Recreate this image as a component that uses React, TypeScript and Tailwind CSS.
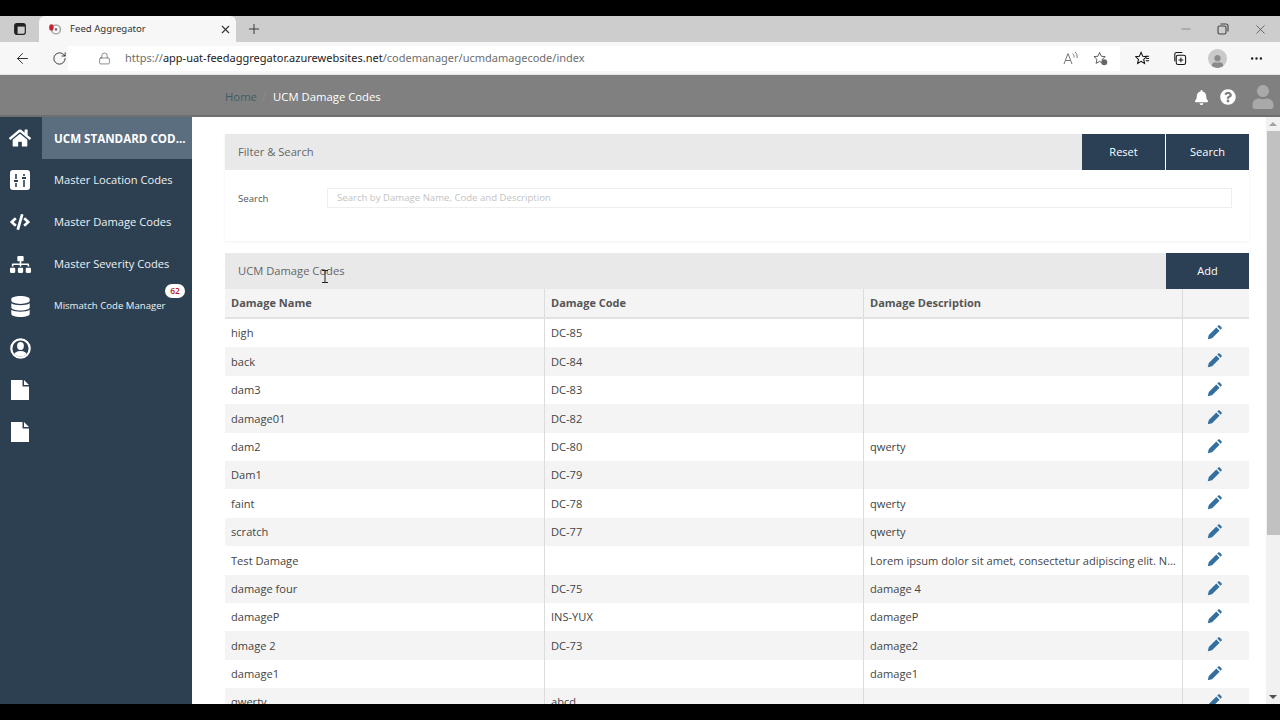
import { FaBell, FaCode, FaDatabase, FaHome, FaQuestionCircle, FaSitemap, FaUser } from "react-icons/fa";
import { ArrowLeft, Ellipsis, Lock, Minus, Plus, RotateCw, X } from "lucide-react";
import type { ReactNode } from "react";

const rows = [
  ["high", "DC-85", ""],
  ["back", "DC-84", ""],
  ["dam3", "DC-83", ""],
  ["damage01", "DC-82", ""],
  ["dam2", "DC-80", "qwerty"],
  ["Dam1", "DC-79", ""],
  ["faint", "DC-78", "qwerty"],
  ["scratch", "DC-77", "qwerty"],
  ["Test Damage", "", "Lorem ipsum dolor sit amet, consectetur adipiscing elit. Nulla facilisi."],
  ["damage four", "DC-75", "damage 4"],
  ["damageP", "INS-YUX", "damageP"],
  ["dmage 2", "DC-73", "damage2"],
  ["damage1", "", "damage1"],
  ["qwerty", "abcd", ""],
];

function SlidersIcon() {
  return (
    <svg width="20" height="20" viewBox="0 0 20 20">
      <rect width="20" height="20" rx="3" fill="#fff" />
      <path d="M6 4v5M6 13v4M14 4v2M14 10v7" stroke="#2c4052" strokeWidth="1.6" />
      <path d="M4 11h4M12 8h4" stroke="#2c4052" strokeWidth="2.2" />
    </svg>
  );
}

function UserRing() {
  return (
    <svg width="21" height="21" viewBox="0 0 21 21">
      <clipPath id="ring">
        <circle cx="10.5" cy="10.5" r="8" />
      </clipPath>
      <circle cx="10.5" cy="10.5" r="9.2" fill="none" stroke="#fff" strokeWidth="2.2" />
      <g clipPath="url(#ring)" fill="#fff">
        <ellipse cx="10.5" cy="8" rx="3.4" ry="4" />
        <ellipse cx="10.5" cy="18" rx="7" ry="5" />
      </g>
    </svg>
  );
}

function FileIcon() {
  return (
    <svg width="18" height="20" viewBox="0 0 18 20">
      <path d="M0 0h11.5v6.5H18V20H0zM13 0l5 5h-5z" fill="#fff" />
    </svg>
  );
}

function PencilIcon() {
  return (
    <svg width="15" height="15" viewBox="0 0 16 16" fill="#33709f">
      <path d="M.8 15.2 1.9 10.6 9.9 2.6l3.5 3.5-8 8z" />
      <path d="M11 1.5 11.9.6a1.2 1.2 0 0 1 1.7 0l1.8 1.8a1.2 1.2 0 0 1 0 1.7l-.9.9z" />
    </svg>
  );
}

const menu: { icon: ReactNode; label?: string; active?: boolean; small?: boolean; badge?: string }[] = [
  { icon: <FaHome size={22} />, label: "UCM STANDARD COD...", active: true },
  { icon: <SlidersIcon />, label: "Master Location Codes" },
  { icon: <FaCode size={20} />, label: "Master Damage Codes" },
  { icon: <FaSitemap size={21} />, label: "Master Severity Codes" },
  { icon: <FaDatabase size={21} />, label: "Mismatch Code Manager", small: true, badge: "62" },
  { icon: <UserRing /> },
  { icon: <FileIcon /> },
  { icon: <FileIcon /> },
];

function BrowserChrome() {
  return (
    <div className="shrink-0 font-['Noto_Sans',sans-serif]">
      <div className="flex h-[26px] items-end bg-[#cdcdcd]">
        <div className="flex h-[26px] w-[39px] items-center justify-center">
          <svg width="12" height="12" viewBox="0 0 12 12" fill="none">
            <rect x="0.7" y="0.7" width="10.6" height="10.6" rx="2" stroke="#222" strokeWidth="1.2" />
            <rect x="1" y="1" width="10" height="2.6" fill="#222" />
            <rect x="1" y="1" width="2.6" height="10" fill="#222" />
          </svg>
        </div>
        <div className="flex h-[26px] w-[197px] items-center rounded-t-md bg-[#f7f7f7] pl-[9px] pr-[4px]">
          <svg width="14" height="14" viewBox="0 0 14 14" fill="none">
            <circle cx="8" cy="7.4" r="4.4" stroke="#a9a9a9" strokeWidth="1.6" />
            <circle cx="8" cy="7.4" r="1.3" fill="#777" />
            <ellipse cx="3.4" cy="5.4" rx="2.2" ry="3.2" fill="#c8202f" />
          </svg>
          <span className="ml-[8px] flex-1 text-[9.6px] text-[#333]">Feed Aggregator</span>
          <X size={13} className="text-[#333]" />
        </div>
        <div className="flex h-[26px] w-[36px] items-center justify-center">
          <Plus size={16} strokeWidth={1.4} className="text-[#333]" />
        </div>
        <div className="flex-1" />
        <div className="flex h-[26px] items-center gap-[24px] pr-[12px] text-[#444]">
          <Minus size={14} strokeWidth={1.3} className="text-[#777]" />
          <svg width="12" height="12" viewBox="0 0 12 12" fill="none" stroke="#444" strokeWidth="1.1">
            <rect x="1" y="3" width="8" height="8" rx="1.5" />
            <path d="M3.5 1h5.5a2 2 0 0 1 2 2v5.5" />
          </svg>
          <X size={15} strokeWidth={1.2} />
        </div>
      </div>
      <div className="flex h-[33px] items-center bg-[#f7f7f7] shadow-[inset_0_-1px_0_#e5e5e5]">
        <div className="flex w-[68px] shrink-0 items-center pl-[14px]">
          <ArrowLeft size={17} strokeWidth={1.3} className="text-[#222]" />
          <RotateCw size={15} strokeWidth={1.4} className="ml-[21px] text-[#222]" />
        </div>
        <div className="flex h-[25px] w-[1052px] shrink-0 items-center bg-white pb-[1px] pl-[30px] pr-[12px]">
          <Lock size={13} strokeWidth={1.2} className="text-[#555]" />
          <span className="ml-[14px] flex-1 text-[11px] text-[#6e6e6e]">
            https://<span className="text-[#1c1c1c]">app-uat-feedaggregator.azurewebsites.net</span>/codemanager/ucmdamagecode/index
          </span>
          <svg width="15" height="14" viewBox="0 0 15 14" fill="none" stroke="#777" strokeWidth="1">
            <path d="M1 13 5 2.5 9 13M2.4 9.5h5.2M9.5 2.5c1.4 1 1.8 2.6 1.6 4M12 1c1.8 1.6 2.4 3.6 2 6" />
          </svg>
          <svg className="ml-[15px]" width="15" height="15" viewBox="0 0 16 16" fill="none" stroke="#555" strokeWidth="1">
            <path d="M7 1.5 8.8 5.6l4.2.4-3.2 2.9.9 4.3L7 11l-3.7 2.2.9-4.3L1 6l4.2-.4z" />
            <circle cx="12" cy="12" r="3.2" fill="#666" stroke="none" />
          </svg>
        </div>
        <div className="flex flex-1 items-center justify-between pl-[15px] pr-[16px] text-[#222]">
          <svg width="15" height="15" viewBox="0 0 16 16" fill="none" stroke="#111" strokeWidth="1.1">
            <path d="M6.5 1.5 8.3 5.6l4.2.4-3.2 2.9.9 4.3L6.5 11l-3.7 2.2.9-4.3L.6 6l4.1-.4z" />
            <path d="M11 5.5h4M12 8h3M11.5 10.5h3.5" />
          </svg>
          <svg width="15" height="15" viewBox="0 0 16 16" fill="none" stroke="#111" strokeWidth="1.1">
            <rect x="4.5" y="4.5" width="10" height="10" rx="2" />
            <path d="M9.5 7v5M7 9.5h5M3 11V3.5A2 2 0 0 1 5 1.5h6" />
          </svg>
          <div className="flex h-[19px] w-[19px] items-end justify-center overflow-hidden rounded-full bg-[#c9c9c9]">
            <FaUser size={13} className="text-[#8a8a8a]" />
          </div>
          <Ellipsis size={15} className="text-[#222]" />
        </div>
      </div>
    </div>
  );
}

function Sidebar() {
  return (
    <aside className="relative w-[192px] shrink-0 bg-[#2c4052] text-white">
      {menu.map((m, i) => (
        <div key={i} className="flex h-[42px] items-stretch">
          <div className="flex w-[42px] shrink-0 items-center justify-center pr-[2px]">{m.icon}</div>
          {m.label && (
            <div className={`relative flex flex-1 items-center whitespace-nowrap pl-[12px] ${m.active ? "bg-[#5a6e80] pt-[1px] text-[11.6px] font-bold" : m.small ? "text-[9.6px] text-[#eef1f3]" : "text-[11.15px] text-[#eef1f3]"}`}>
              {m.label}
              {m.badge && (
                <span className="absolute right-[7px] top-[-1px] flex h-[14px] w-[20px] items-center justify-center rounded-full bg-white text-[8.5px] font-semibold text-[#b3202c]">
                  {m.badge}
                </span>
              )}
            </div>
          )}
        </div>
      ))}
    </aside>
  );
}

function PanelHead({ title, children }: { title: string; children: ReactNode }) {
  return (
    <div className="flex h-[36px] items-stretch bg-[#e9e9e9]">
      <div className="flex flex-1 items-center pl-[13px] pt-[1px] text-[11.2px] text-[#666]">{title}</div>
      {children}
    </div>
  );
}

function DarkButton({ label }: { label: string }) {
  return (
    <button className="flex w-[83px] items-center justify-center bg-[#2b4054] text-[11px] text-white">{label}</button>
  );
}

export default function App() {
  return (
    <div className="flex h-[720px] w-[1280px] flex-col overflow-hidden bg-black py-[16px] font-['Open_Sans',sans-serif]">
      <BrowserChrome />
      <header className="flex h-[42px] shrink-0 items-center border-b-2 border-[#6f6f6f] bg-[#808080] pt-[4px]">
        <div className="ml-[225px] flex-1 text-[11.3px]">
          <span className="text-[#3f5c66]">Home</span>
          <span className="mx-[5px] text-[#8c8c8c]">/</span>
          <span className="ml-[2px] text-white">UCM Damage Codes</span>
        </div>
        <div className="flex items-center pr-[5px] text-white">
          <FaBell size={15} />
          <FaQuestionCircle size={16} className="ml-[11px]" />
          <FaUser size={24} className="ml-[15px] text-[#a9a9a9]" />
        </div>
      </header>
      <div className="flex min-h-0 flex-1">
        <Sidebar />
        <main className="relative min-w-0 flex-1 overflow-hidden bg-white pl-[33px] pr-[31px] pt-[17px]">
          <section className="h-[107px] shadow-[0_1px_3px_rgba(0,0,0,0.06)]">
            <PanelHead title="Filter & Search">
              <DarkButton label="Reset" />
              <div className="w-px bg-white" />
              <DarkButton label="Search" />
            </PanelHead>
            <div className="flex items-center pl-[13px] pr-[17px] pt-[18px]">
              <span className="w-[89px] pt-[2px] text-[9.6px] text-[#555]">Search</span>
              <div className="flex h-[20px] flex-1 items-center border border-[#eeeeee] pl-[9px] pt-[1px] text-[9.6px] text-[#c4c4c4]">
                Search by Damage Name, Code and Description
              </div>
            </div>
          </section>
          <section className="mt-[12px]">
            <PanelHead title="UCM Damage Codes">
              <DarkButton label="Add" />
            </PanelHead>
            <div className="grid h-[30px] grid-cols-[319px_319px_319px_1fr] border-b-2 border-[#e2e2e2] bg-[#f4f4f4] text-[11px] font-bold text-[#555]">
              <div className="flex items-center pl-[6px] pt-[1px]">Damage Name</div>
              <div className="flex items-center border-l border-[#dcdcdc] pl-[6px] pt-[1px]">Damage Code</div>
              <div className="flex items-center border-l border-[#dcdcdc] pl-[6px] pt-[1px]">Damage Description</div>
              <div className="border-l border-[#dcdcdc]" />
            </div>
            {rows.map((r, i) => (
              <div key={i} className={`grid h-[28.4px] grid-cols-[319px_319px_319px_1fr] text-[11.1px] text-[#444] ${i % 2 ? "bg-[#f4f4f4]" : "bg-white"}`}>
                <div className="flex items-center pl-[6px] pt-[1px]">{r[0]}</div>
                <div className="flex items-center border-l border-[#dcdcdc] pl-[6px] pt-[1px]">{r[1]}</div>
                <div className="flex min-w-0 items-center border-l border-[#dcdcdc] pl-[6px] pr-[1px] pt-[1px]">
                  <span className="truncate">{r[2]}</span>
                </div>
                <div className="flex items-start justify-center border-l border-[#dcdcdc] pr-[3px] pt-[6px]">
                  <PencilIcon />
                </div>
              </div>
            ))}
          </section>
          <div className="absolute bottom-0 right-0 top-0 flex w-[14px] flex-col items-end bg-[#f1f1f1]">
            <div className="mr-[3px] mt-[5px] h-0 w-0 border-x-[4px] border-b-[4px] border-x-transparent border-b-[#a3a3a3]" />
            <div className="mt-[5px] h-[404px] w-[13px] bg-[#c1c1c1]" />
            <div className="mb-[5px] mr-[3px] mt-auto h-0 w-0 border-x-[4px] border-t-[4px] border-x-transparent border-t-[#505050]" />
          </div>
          <svg className="absolute left-[129px] top-[153px]" width="8" height="13" viewBox="0 0 8 13" fill="none" stroke="#222" strokeWidth="1">
            <path d="M1 .5h6M1 12.5h6M4 .5v12" />
          </svg>
        </main>
      </div>
    </div>
  );
}
